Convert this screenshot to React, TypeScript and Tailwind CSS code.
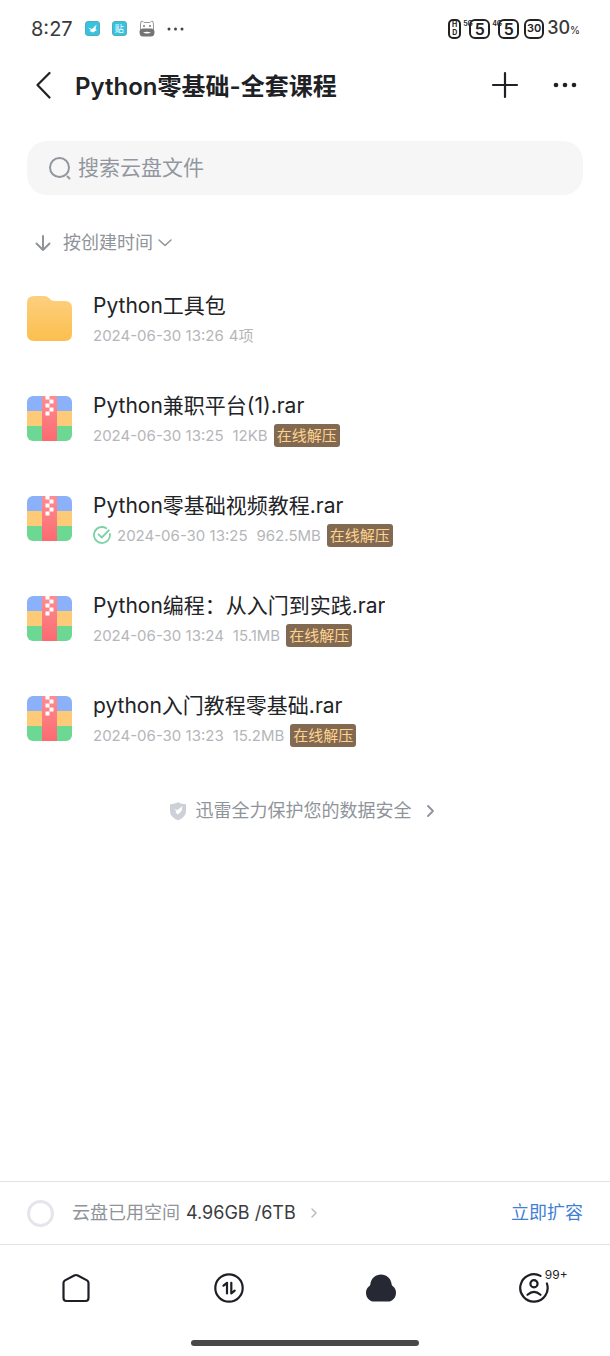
import React from "react";

type FileItem = {
  name: string;
  time: string;
  detail: string;
  kind: "folder" | "archive";
  saved?: boolean;
};

const files: FileItem[] = [
  { name: "Python工具包", time: "2024-06-30 13:26", detail: "4项", kind: "folder" },
  { name: "Python兼职平台(1).rar", time: "2024-06-30 13:25", detail: "12KB", kind: "archive" },
  { name: "Python零基础视频教程.rar", time: "2024-06-30 13:25", detail: "962.5MB", kind: "archive", saved: true },
  { name: "Python编程：从入门到实践.rar", time: "2024-06-30 13:24", detail: "15.1MB", kind: "archive" },
  { name: "python入门教程零基础.rar", time: "2024-06-30 13:23", detail: "15.2MB", kind: "archive" },
];

function FolderIcon() {
  return (
    <svg className="size-[45px] shrink-0" viewBox="0 0 45 45" aria-hidden="true">
      <defs>
        <linearGradient id="folder" x1="0" y1="0" x2="0" y2="1">
          <stop offset="0" stopColor="#fdcf7f" />
          <stop offset="1" stopColor="#fcbf4e" />
        </linearGradient>
      </defs>
      <path
        d="M7 0H17Q20 0 22 2L24 4Q25.500 5 28 5H38Q45 5 45 12V38Q45 45 38 45H7Q0 45 0 38V7Q0 0 7 0Z"
        fill="url(#folder)"
      />
    </svg>
  );
}

function ArchiveIcon() {
  return (
    <svg className="size-[45px] shrink-0 rounded-[6px]" viewBox="0 0 45 45" aria-hidden="true">
      <defs>
        <linearGradient id="strap" x1="0" y1="0" x2="0" y2="1">
          <stop offset="0" stopColor="#fc8d92" />
          <stop offset="1" stopColor="#fb6a70" />
        </linearGradient>
      </defs>
      <rect width="45" height="15" fill="#8bb1fa" />
      <rect y="15" width="45" height="15" fill="#fdcb78" />
      <rect y="30" width="45" height="15" fill="#6cd893" />
      <rect x="15" width="15" height="45" fill="url(#strap)" />
      <g fill="#fff">
        <rect x="18.500" y="0" width="4" height="3.500" />
        <rect x="22.500" y="3.500" width="4" height="4" />
        <rect x="18.500" y="7.500" width="4" height="4" />
        <rect x="22.500" y="11.500" width="4" height="4" />
        <rect x="18.500" y="15.500" width="4" height="4" />
      </g>
    </svg>
  );
}

function SavedIcon() {
  return (
    <svg className="mr-[6px] size-[18px] shrink-0" viewBox="0 0 18 18" fill="none" stroke="#7bd2a5" strokeWidth="1.8" strokeLinecap="round" strokeLinejoin="round" aria-hidden="true">
      <path d="M13.300 2.300A8 8 0 1 0 16.900 8" />
      <path d="M5.500 8.300L8.800 11.500L15.800 4.300" />
    </svg>
  );
}

function StatusBar() {
  return (
    <div className="flex h-[57px] items-center justify-between pl-[31px] pr-[30px] text-[#3a3a3a]">
      <div className="flex items-center">
        <span className="text-[20px] leading-6">8:27</span>
        <svg className="ml-3 size-[15px]" viewBox="0 0 15 15" aria-hidden="true">
          <rect x="0.500" y="0.500" width="14" height="14" rx="2.500" fill="#35c3df" stroke="#5aa9b8" />
          <path d="M3 6.500L7 8L11.500 3.500L10.500 8.500L12 9L8 11.500L4.500 10L6 9Z" fill="#fff" />
        </svg>
        <span className="ml-3 flex size-[15px] items-center justify-center rounded-[3px] border border-[#5aa9b8] bg-[#35c3df] text-[9px] leading-none text-white">贴</span>
        <svg className="ml-3 h-[17px] w-4" viewBox="0 0 16 17" aria-hidden="true">
          <path d="M1.500 5L2 1.500Q4 .5 5 2.500H11Q12 .5 14 1.500L14.500 5V10H1.500Z" fill="#fff" stroke="#999" />
          <circle cx="5" cy="6" r="1" fill="#777" />
          <circle cx="11" cy="6" r="1" fill="#777" />
          <path d="M3.500 8.500H12.500Q15.500 9 15.500 12Q15.500 16.500 12 16.500H4Q.5 16.500 .5 12Q.5 9 3.500 8.500Z" fill="#747474" />
          <path d="M4 12.800Q8 10.500 12 12.800Q8 14 4 12.800Z" fill="#fff" />
        </svg>
        <svg className="ml-3 h-1 w-[17px]" viewBox="0 0 17 4" fill="#444" aria-hidden="true">
          <circle cx="2" cy="2" r="1.500" />
          <circle cx="8.500" cy="2" r="1.500" />
          <circle cx="15" cy="2" r="1.500" />
        </svg>
      </div>
      <div className="flex items-center font-semibold text-[#222]">
        <span className="flex h-5 w-[13px] flex-col items-center justify-center rounded-[5px] border-2 border-[#222] text-[7px] font-bold leading-[8px]">
          <span>H</span>
          <span>D</span>
        </span>
        {["5G", "4G"].map((network) => (
          <span key={network} className="relative ml-2 flex h-5 w-[21px] items-center justify-center rounded-[6px] border-2 border-[#222] text-[16px] leading-none">
            <span className="absolute -left-[8px] -top-[1px] text-[7px] leading-[8px]">{network}</span>
            5
          </span>
        ))}
        <span className="ml-[5px] flex h-5 w-5 items-center justify-center rounded-[6px] border-2 border-[#222] text-[11px] leading-none">30</span>
        <span className="ml-[3px] text-[18px] font-medium leading-6 text-[#3a3a3a]">
          30<span className="text-[10px]">%</span>
        </span>
      </div>
    </div>
  );
}

function Header() {
  return (
    <header className="flex h-14 items-center pl-[33px] pr-8 text-[#202124]">
      <button type="button" aria-label="返回" className="mr-[21px]">
        <svg className="h-[28px] w-[21px]" viewBox="0 0 21 28" fill="none" stroke="currentColor" strokeWidth="2.200" strokeLinecap="round" strokeLinejoin="round">
          <path d="M16.500 2L4.500 14L16.500 26.500" />
        </svg>
      </button>
      <h1 className="flex-1 whitespace-nowrap pt-1 text-[24px] font-semibold leading-8">Python零基础-全套课程</h1>
      <button type="button" aria-label="新建">
        <svg className="size-7" viewBox="0 0 28 28" stroke="currentColor" strokeWidth="2.200" strokeLinecap="round">
          <path d="M14 2V26M2 14H26" />
        </svg>
      </button>
      <button type="button" aria-label="更多" className="ml-[33px]">
        <svg className="h-7 w-[26px]" viewBox="0 0 26 28" fill="currentColor">
          <circle cx="4" cy="14" r="2.300" />
          <circle cx="13" cy="14" r="2.300" />
          <circle cx="22" cy="14" r="2.300" />
        </svg>
      </button>
    </header>
  );
}

function FileRow({ file }: { file: FileItem }) {
  return (
    <li className="flex h-[100px] gap-[21px]">
      <div className="pt-[5px]">{file.kind === "folder" ? <FolderIcon /> : <ArchiveIcon />}</div>
      <div className="min-w-0">
        <p className="truncate text-[21px] leading-[30px] text-[#222326]">{file.name}</p>
        <div className="flex h-7 items-center whitespace-nowrap text-[15px] leading-[23px] text-[#b5b6b9]">
          {file.saved && <SavedIcon />}
          <span>{file.time}</span>
          <span className={file.kind === "folder" ? "ml-[5px]" : "ml-[9px]"}>{file.detail}</span>
          {file.kind === "archive" && (
            <button type="button" className="ml-[6px] rounded-[3px] bg-[#826a52] px-[3px] text-[#ffd38e]">在线解压</button>
          )}
        </div>
      </div>
    </li>
  );
}

function BottomNav() {
  return (
    <nav className="grid h-[86px] grid-cols-4 justify-items-center text-[#1d1f24]">
      <a href="#home" aria-label="首页" className="flex h-[86px] items-center">
        <svg className="size-[30px]" viewBox="0 0 30 30" fill="none" stroke="currentColor" strokeWidth="2.200" strokeLinejoin="round">
          <path d="M13.200 2.500Q15 1.500 16.800 2.500L26 7.400Q27.500 8.300 27.500 10V25Q27.500 28 24.500 28H5.500Q2.500 28 2.500 25V10Q2.500 8.300 4 7.400Z" />
        </svg>
      </a>
      <a href="#transfers" aria-label="传输" className="flex h-[86px] items-center">
        <svg className="size-[30px]" viewBox="0 0 30 30" fill="none" stroke="currentColor" strokeWidth="2.200" strokeLinecap="round" strokeLinejoin="round">
          <circle cx="15" cy="15" r="13.700" />
          <path d="M9.500 12.700L13 9.800V20.500M17.300 9.800V20.500L20.700 17.600" />
        </svg>
      </a>
      <a href="#cloud" aria-label="云盘" aria-current="page" className="flex h-[86px] items-center">
        <svg className="size-8" viewBox="0 0 32 32" fill="#262934">
          <path d="M16 2.500C21.500 2.500 26 6.600 26.600 12C26.700 13.200 27.200 13.700 28.200 14.600C30 16.200 31 18.200 31 20.700C31 25.700 27.500 29.500 22.700 29.500H9.300C4.500 29.500 1 25.700 1 20.700C1 18.200 2 16.200 3.800 14.600C4.800 13.700 5.300 13.200 5.400 12C6 6.600 10.500 2.500 16 2.500Z" />
        </svg>
      </a>
      <a href="#me" aria-label="我的 99+" className="relative flex h-[86px] items-center">
        <svg className="size-[30px]" viewBox="0 0 30 30" fill="none" stroke="currentColor" strokeWidth="2.200" strokeLinecap="round">
          <path d="M21.500 2.900A13.700 13.700 0 1 0 27.900 10.500" />
          <circle cx="15" cy="10.700" r="3.600" />
          <path d="M8.500 21.800Q15 15.800 21.500 21.800" />
        </svg>
        <span className="absolute left-[26px] top-[22px] text-[12px] leading-4">99+</span>
      </a>
    </nav>
  );
}

export default function App() {
  return (
    <div className="flex min-h-screen flex-col bg-white font-['Inter','Noto_Sans_CJK_SC',sans-serif]">
      <StatusBar />
      <Header />
      <main className="flex-1 px-[27px] pt-7">
        <label className="flex h-[54px] items-center rounded-[20px] bg-[#f6f6f6] pl-[21px] text-[#92979f]">
          <svg className="size-6 shrink-0" viewBox="0 0 24 24" fill="none" stroke="currentColor" strokeWidth="2" strokeLinecap="round" aria-hidden="true">
            <circle cx="11.500" cy="11.500" r="9.500" />
            <path d="M19.500 20.500L21.500 22.500" />
          </svg>
          <input
            type="search"
            aria-label="搜索云盘文件"
            placeholder="搜索云盘文件"
            className="ml-[6px] w-full min-w-0 bg-transparent text-[21px] leading-8 outline-none placeholder:text-[#92979f]"
          />
        </label>
        <button type="button" className="ml-[6px] mt-8 flex h-8 items-center text-[18px] leading-8 text-[#8f949a]">
          <svg className="mr-[10px] size-5" viewBox="0 0 20 20" fill="none" stroke="currentColor" strokeWidth="2" strokeLinecap="round" strokeLinejoin="round" aria-hidden="true">
            <path d="M10 3V17M3.500 10.500L10 17L16.500 10.500" />
          </svg>
          按创建时间
          <svg className="ml-1 h-3 w-4" viewBox="0 0 16 12" fill="none" stroke="currentColor" strokeWidth="1.500" strokeLinecap="round" strokeLinejoin="round" aria-hidden="true">
            <path d="M2 3L8 8.500L14 3" />
          </svg>
        </button>
        <ul className="pt-8">
          {files.map((file) => (
            <FileRow key={file.name} file={file} />
          ))}
        </ul>
        <a href="#security" className="mx-auto flex h-10 w-fit items-center pr-[6px] text-[18px] leading-8 text-[#8f949a]">
          <svg className="mr-[9px] h-5 w-[18px]" viewBox="0 0 18 20" aria-hidden="true">
            <path d="M9 1Q11.500 3 17 3.200V10.500Q17 16 9 19.300Q1 16 1 10.500V3.200Q6.500 3 9 1Z" fill="#cdd0d6" />
            <path d="M4.500 7.500L8.500 9L13.500 5L12.500 10L9 13.500L6.500 11.500L7.500 10Z" fill="#fff" />
          </svg>
          迅雷全力保护您的数据安全
          <svg className="ml-3 h-4 w-3" viewBox="0 0 12 16" fill="none" stroke="currentColor" strokeWidth="1.800" strokeLinecap="round" strokeLinejoin="round" aria-hidden="true">
            <path d="M4 3L9 8L4 13" />
          </svg>
        </a>
      </main>
      <section className="flex h-16 items-center border-y border-[#e2e3e5] px-[27px] text-[18px] leading-8">
        <svg className="mr-[18px] size-[27px]" viewBox="0 0 27 27" fill="none" aria-hidden="true">
          <circle cx="13.500" cy="13.500" r="12" stroke="#e5e6ec" strokeWidth="3" />
        </svg>
        <span className="text-[#8f949a]">云盘已用空间</span>
        <span className="ml-[6px] text-[#3b3c40]">4.96GB /6TB</span>
        <svg className="ml-3 h-3 w-3" viewBox="0 0 12 12" fill="none" stroke="#b8bbc0" strokeWidth="1.500" strokeLinecap="round" strokeLinejoin="round" aria-hidden="true">
          <path d="M4 2L8 6L4 10" />
        </svg>
        <a href="#upgrade" className="ml-auto text-[#3f7fd6]">立即扩容</a>
      </section>
      <BottomNav />
      <div className="flex h-[25px] justify-center pt-[9px]">
        <div className="h-[6px] w-[228px] rounded-full bg-[#484848]" />
      </div>
    </div>
  );
}
